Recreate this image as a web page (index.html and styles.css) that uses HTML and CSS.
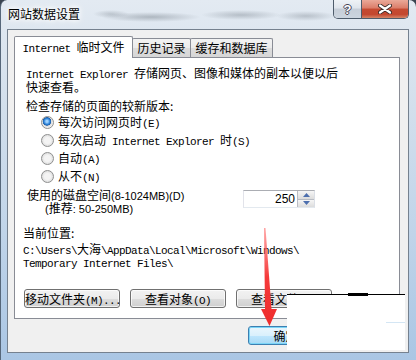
FILE: index.html
```html
<!DOCTYPE html>
<html lang="zh-CN">
<head>
<meta charset="utf-8">
<title>网站数据设置</title>
<link rel="stylesheet" href="styles.css">
</head>
<body>
<div class="window">
  <div class="titlebar">
    <div class="title">网站数据设置</div>
    <div class="caption">
      <div class="cbtn help">?</div>
      <div class="cbtn close">
        <svg width="14" height="10" viewBox="0 0 14 10"><path d="M2 1.5 L12 8.5 M12 1.5 L2 8.5" stroke="#3a2a28" stroke-width="4" stroke-linecap="round"/><path d="M2 1.5 L12 8.5 M12 1.5 L2 8.5" stroke="#fff" stroke-width="2.2" stroke-linecap="round"/></svg>
      </div>
    </div>
  </div>
  <div class="client">
    <div class="tabs">
      <div class="tab active"><span class="en">Internet </span>临时文件</div>
      <div class="tab t2">历史记录</div>
      <div class="tab t3">缓存和数据库</div>
    </div>
    <div class="panel">
      <p class="desc"><span class="en">Internet Explorer </span>存储网页、图像和媒体的副本以便以后<br>快速查看。</p>
      <p class="check">检查存储的页面的较新版本:</p>
      <div class="radios">
        <div class="radio"><span class="rb on"></span><span class="lbl">每次访问网页时<span class="en">(E)</span></span></div>
        <div class="radio"><span class="rb"></span><span class="lbl">每次启动<span class="en"> Internet Explorer </span>时<span class="en">(S)</span></span></div>
        <div class="radio"><span class="rb"></span><span class="lbl">自动<span class="en">(A)</span></span></div>
        <div class="radio"><span class="rb"></span><span class="lbl">从不<span class="en">(N)</span></span></div>
      </div>
      <div class="disk">
        <div class="disk-labels">
          <div class="disk-l1">使用的磁盘空间<span class="sans">(8-1024MB)(D)</span></div>
          <div class="disk-l2"><span class="sans">(</span>推荐<span class="sans">: 50-250MB)</span></div>
        </div>
        <div class="spin">
          <div class="spin-val">250</div>
          <div class="spin-btns">
            <div class="sb up"><svg width="7" height="4" viewBox="0 0 7 4"><path d="M3.5 0 L7 4 L0 4 Z" fill="#4d6fae"/></svg></div>
            <div class="sb down"><svg width="7" height="4" viewBox="0 0 7 4"><path d="M0 0 L7 0 L3.5 4 Z" fill="#4d6fae"/></svg></div>
          </div>
        </div>
      </div>
      <p class="loc">当前位置:</p>
      <p class="path"><span class="en">C:\Users\</span>大海<span class="en">\AppData\Local\Microsoft\Windows\</span><br><span class="en">Temporary Internet Files\</span></p>
      <div class="btnrow">
        <div class="btn">移动文件夹<span class="en">(M)...</span></div>
        <div class="btn">查看对象<span class="en">(O)</span></div>
        <div class="btn">查看文件<span class="en">(V)</span></div>
      </div>
    </div>
    <div class="okrow">
      <div class="btn ok">确定</div>
      <div class="btn cancel">取消</div>
    </div>
  </div>
  <div class="cover"><span class="cover-mark"></span><span class="cover-blue"></span></div>
  <svg class="arrow" width="24" height="104" viewBox="0 0 24 104">
    <defs>
      <linearGradient id="ag" x1="0" y1="0" x2="0" y2="1">
        <stop offset="0" stop-color="#ff6a6a" stop-opacity="0.6"/>
        <stop offset="0.5" stop-color="#f53a3a"/>
        <stop offset="1" stop-color="#ee2c2c"/>
      </linearGradient>
    </defs>
    <path d="M5 2 L6.5 2 L12.5 83 L18 83 L10.5 100 L2 83 L6 83 Z" fill="url(#ag)"/>
  </svg>
</div>
</body>
</html>
```
FILE: styles.css
```css
* { box-sizing: border-box; margin: 0; padding: 0; }
html, body { width: 416px; height: 360px; overflow: hidden; }
body {
  font-family: "Noto Sans CJK SC", "Liberation Sans", sans-serif;
  font-size: 12px;
  color: #000;
  background: #3a4450;
}
.en {
  font-family: "Liberation Mono", "Noto Sans CJK SC", monospace;
  font-size: 11px;
  letter-spacing: -0.6px;
  white-space: pre;
  line-height: 10px;
}
.sans { font-family: "Liberation Sans", sans-serif; font-size: 11px; line-height: 10px; }

.window {
  position: relative;
  width: 416px;
  height: 360px;
  display: flex;
  flex-direction: column;
  border-radius: 7px 7px 0 0;
  border-left: 1px solid #56677a;
  background: linear-gradient(180deg, #e3eaf2 0%, #d2dfec 30%, #c0d4e9 65%, #aac6e4 100%);
}
.titlebar {
  height: 29px;
  flex: none;
  display: flex;
  justify-content: space-between;
  align-items: flex-start;
  padding: 0 7px 0 7px;
  background:
    radial-gradient(ellipse 50px 5px at 150px 17px, rgba(80,90,100,0.35), transparent),
    radial-gradient(ellipse 40px 5px at 240px 15px, rgba(80,90,100,0.30), transparent),
    radial-gradient(ellipse 30px 5px at 305px 16px, rgba(80,90,100,0.28), transparent),
    radial-gradient(ellipse 18px 4px at 110px 14px, rgba(80,90,100,0.25), transparent);
}
.title {
  margin-top: 7px;
  line-height: 14px;
  font-size: 12px;
  text-shadow: 0 0 4px #fff, 0 0 6px #fff, 0 0 10px #fff;
}
.caption {
  display: flex;
  height: 19px;
  border: 1px solid #4e5c6b;
  border-top: none;
  border-radius: 0 0 5px 5px;
  overflow: hidden;
}
.cbtn { display: flex; align-items: center; justify-content: center; }
.help {
  width: 28px;
  border-right: 1px solid #4e5c6b;
  background: linear-gradient(180deg, #eef2f6 0%, #dfe5ec 45%, #c6ced8 50%, #ccd5df 100%);
  color: #fff;
  font-family: "Liberation Sans", sans-serif;
  font-weight: bold;
  font-size: 13px;
  text-shadow: -1px 0 #445, 1px 0 #445, 0 -1px #445, 0 1px #445;
}
.close {
  width: 46px;
  background: linear-gradient(180deg, #eaa999 0%, #db7d69 45%, #c54a31 50%, #c3472f 80%, #d58466 100%);
}

.client {
  flex: 1;
  margin: 0 7px 7px 6px;
  border: 1px solid #75818f;
  background: #f0f0f0;
  padding: 6px 8px 0 6px;
}
.tabs {
  display: flex;
  align-items: flex-end;
  height: 21px;
}
.tab {
  height: 19px;
  border: 1px solid #898c95;
  border-bottom: none;
  border-radius: 2px 2px 0 0;
  background: linear-gradient(180deg, #f3f3f3 0%, #ebebeb 50%, #dddddd 51%, #d6d6d6 100%);
  line-height: 18px;
  text-align: center;
  white-space: nowrap;
}
.tab.active {
  position: relative;
  z-index: 1;
  width: 119px;
  height: 22px;
  margin-bottom: -1px;
  background: #fff;
  line-height: 20px;
}
.t2 { width: 59px; margin-left: -1px; }
.t3 { width: 83px; margin-left: -1px; }

.panel {
  width: 386px;
  height: 262px;
  border: 1px solid #898c95;
  background: #fff;
  padding: 0 0 0 8px;
}
.desc { margin: 8px 0 0 3px; line-height: 13px; }
.check { margin: 6px 0 0 3px; line-height: 13px; }
.radios { margin: 1px 0 0 18px; }
.radio { display: flex; align-items: center; height: 18px; }
.lbl { line-height: 18px; white-space: nowrap; }
.rb {
  width: 13px;
  height: 13px;
  border-radius: 50%;
  border: 1px solid #8e8f8f;
  background: radial-gradient(circle at 50% 50%, #f4f4f4 0 3px, #dcdcdc 6px);
  margin-right: 4px;
  flex: none;
}
.rb.on {
  background: radial-gradient(circle at 45% 40%, #9fd3ff 0 1px, #2a82da 3px, #1f5fa8 4px, #dcdcdc 4.5px, #eeeeee 6px);
}
.disk {
  display: grid;
  grid-template-columns: 216px 72px;
  margin: 4px 0 0 4px;
}
.disk-l1 { line-height: 12px; }
.disk-l2 { line-height: 12px; margin: 1px 0 0 18px; }
.spin {
  margin-top: 1px;
  height: 18px;
  display: flex;
  border: 1px solid #abadb3;
  border-color: #abadb3 #dbdfe6 #e3e9ef #e2e3ea;
}
.spin-val {
  flex: 1;
  text-align: right;
  font-family: "Liberation Sans", sans-serif;
  font-size: 12px;
  line-height: 16px;
  padding-right: 2px;
}
.spin-btns {
  width: 17px;
  display: flex;
  flex-direction: column;
  border-left: 1px solid #b8bcc4;
}
.sb {
  flex: 1;
  display: flex;
  align-items: center;
  justify-content: center;
  background: linear-gradient(180deg, #f6f6f6, #dcdcdc);
}
.sb.up { border-bottom: 1px solid #b8bcc4; }
.loc { margin-top: 12px; line-height: 13px; }
.path { margin-top: 4px; line-height: 12px; }
.btnrow { display: flex; gap: 10px; margin: 20px 0 0 1px; }
.btn {
  width: 96px;
  height: 19px;
  border: 1px solid #707070;
  border-radius: 3px;
  background: linear-gradient(180deg, #f2f2f2 0%, #ebebeb 50%, #dddddd 51%, #cfcfcf 100%);
  box-shadow: inset 0 0 0 1px rgba(255,255,255,0.7);
  line-height: 17px;
  text-align: center;
  white-space: nowrap;
}
.okrow {
  display: flex;
  justify-content: flex-end;
  gap: 6px;
  margin-top: 7px;
}
.btn.ok {
  width: 75px;
  border-color: #3c7fb1;
  background: linear-gradient(180deg, #eaf6fd 0%, #d9f0fc 50%, #bee6fd 51%, #a7d9f5 100%);
  box-shadow: inset 0 0 0 1px #7bd5f7;
}
.btn.cancel { width: 71px; }

.cover {
  position: absolute;
  left: 286px;
  top: 294px;
  width: 118px;
  height: 56px;
  background: #fff;
  border-top: 1px solid #000;
}
.cover-mark {
  position: absolute;
  left: 61px;
  top: -2px;
  width: 20px;
  height: 3px;
  background: #000;
}
.cover-blue {
  position: absolute;
  left: 99px;
  top: 27px;
  width: 19px;
  height: 1px;
  background: #d4e6f4;
}
.arrow {
  position: absolute;
  left: 258px;
  top: 226px;
  pointer-events: none;
}
```
